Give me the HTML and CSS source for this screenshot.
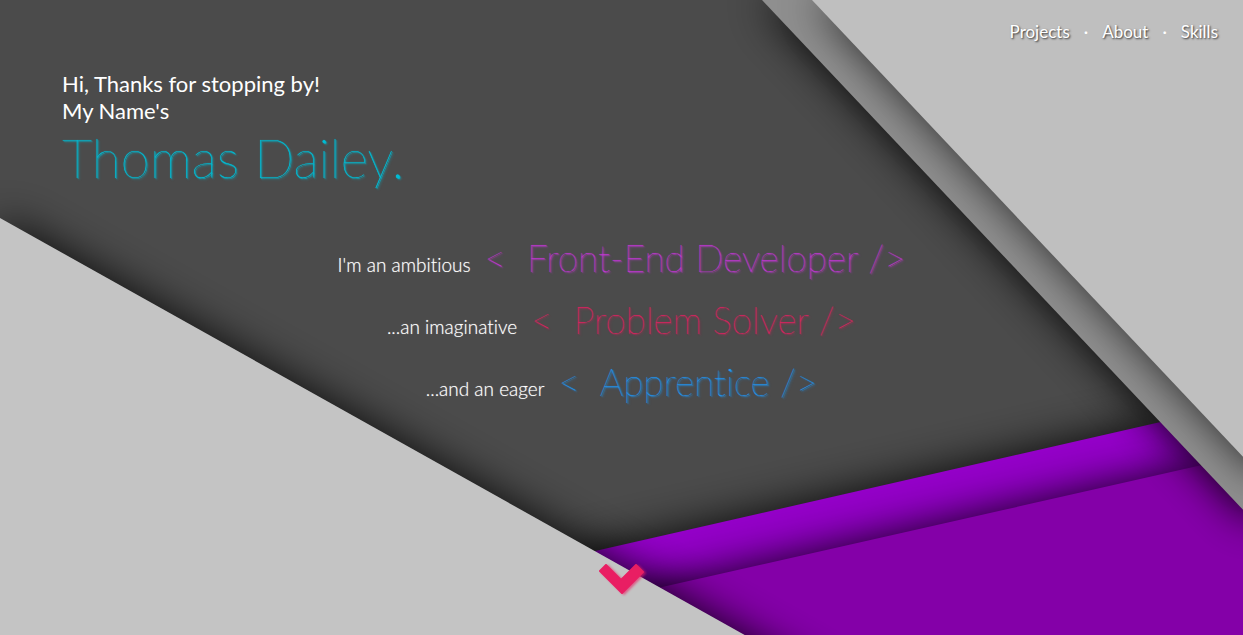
FILE: index.html
```html
<!DOCTYPE html>
<html lang="en">
<head>
<meta charset="utf-8">
<meta name="viewport" content="width=device-width, initial-scale=1">
<title>Thomas Dailey</title>
<link rel="stylesheet" href="styles.css">
</head>
<body>
<div class="hero">
  <svg class="backdrop" viewBox="0 0 1243 635" preserveAspectRatio="none" aria-hidden="true">
    <defs>
      <filter id="soft" filterUnits="userSpaceOnUse" x="-100" y="-100" width="1600" height="1000">
        <feGaussianBlur stdDeviation="22"/>
      </filter>
    </defs>
    <g class="shade" filter="url(#soft)"><path d="M580 555 1160 422 1300 700H580Z"/></g>
    <path class="violet" d="M560 559 1200 413V700H560Z"/>
    <g class="shade" filter="url(#soft)"><path d="M640 592 1200 466 1400 700H640Z"/></g>
    <path class="purple" d="M600 601 1300 443V700H600Z"/>
    <g class="shade" filter="url(#soft)"><path d="M762 0 1253 521 1400 400V0Z"/></g>
    <path class="stripe" d="M762 0 1362 636V0Z"/>
    <g class="shade-light" filter="url(#soft)"><path d="M812 0 1260 475 1400 400V0Z"/></g>
    <path class="corner" d="M812 0 1332 551V0Z"/>
    <g class="shade" filter="url(#soft)"><path d="M0 218 834 685H0Z"/></g>
    <path class="ground" d="M0 218 834 685H0Z"/>
  </svg>
  <nav class="nav">
    <a href="#projects">Projects</a><span class="dot">·</span><a href="#about">About</a><span class="dot">·</span><a href="#skills">Skills</a>
  </nav>
  <header class="intro">
    <p class="hello">Hi, Thanks for stopping by!<br>My Name's</p>
    <h1 class="name">Thomas Dailey.</h1>
  </header>
  <main class="roles">
    <p class="role"><span class="lead">I'm an ambitious</span><span class="tag orchid">&lt;&nbsp; Front-End Developer /&gt;</span></p>
    <p class="role"><span class="lead">...an imaginative</span><span class="tag rose">&lt;&nbsp; Problem Solver /&gt;</span></p>
    <p class="role"><span class="lead">...and an eager</span><span class="tag azure">&lt;&nbsp; Apprentice /&gt;</span></p>
  </main>
  <a class="down" href="#projects" aria-label="Scroll down">
    <svg class="chevron" viewBox="0 0 46 30"><path d="M7 1 22 16 37 1 44 8 23 29 1 7Z"/></svg>
  </a>
</div>
</body>
</html>
```
FILE: styles.css
```css
* { box-sizing: border-box; }

body {
  margin: 0;
  font-family: Lato, sans-serif;
  font-variant-ligatures: none;
  color: #fff;
}

.hero {
  position: relative;
  isolation: isolate;
  display: flex;
  flex-direction: column;
  min-height: 100vh;
  overflow: hidden;
  background: #4b4b4b;
}

.backdrop {
  position: absolute;
  inset: 0;
  z-index: -1;
  width: 100%;
  height: 100%;
}

.shade { fill: #000; opacity: 0.9; }
.shade-light { fill: #000; opacity: 0.7; }
.violet { fill: #9400c8; }
.purple { fill: #8400a8; }
.stripe { fill: #8f8f8f; }
.corner { fill: #bfbfbf; }
.ground { fill: #c4c4c4; }

.nav {
  display: flex;
  justify-content: flex-end;
  gap: 14px;
  padding: 21px 25px 0;
  font-size: 17px;
  line-height: 22px;
  text-shadow: 1px 1px 2px #333;
}

.nav a { color: inherit; text-decoration: none; }
.dot { text-shadow: none; }

.intro { padding: 27px 62px 0; }

.hello {
  margin: 0;
  font-size: 22px;
  line-height: 27px;
}

.name {
  margin: 0;
  font-size: 53px;
  line-height: 68px;
  font-weight: 100;
  color: #00bcd4;
  text-shadow: 0 0 1px #00bcd4, 1px 1px 1px #00bcd4, 2px 2px 2px rgba(0, 188, 212, 0.4);
}

.roles {
  display: flex;
  flex-direction: column;
  gap: 14px;
  padding-top: 42px;
}

.role {
  display: flex;
  justify-content: center;
  align-items: baseline;
  gap: 14px;
  margin: 0;
}

.lead {
  font-size: 19px;
  line-height: 24px;
  font-weight: 300;
  text-shadow: 0 0 1px rgba(255, 255, 255, 0.6);
}

.tag {
  font-size: 37px;
  line-height: 48px;
  font-weight: 100;
}

.orchid { color: #c837dc; text-shadow: 0 0 1px #c837dc, 1px 1px 1px #c837dc, 2px 2px 2px rgba(200, 55, 220, 0.4); }
.rose { color: #e91e63; text-shadow: 0 0 1px #e91e63, 1px 1px 1px rgba(233, 30, 99, 0.6), 2px 2px 2px rgba(233, 30, 99, 0.3); }
.azure { color: #2196f3; text-shadow: 0 0 1px #2196f3, 1px 1px 1px #2196f3, 2px 2px 2px rgba(33, 150, 243, 0.4); }

.down {
  align-self: center;
  margin: auto 0 41px;
  line-height: 0;
}

.chevron {
  width: 46px;
  height: 30px;
  overflow: visible;
  fill: #e91e63;
  stroke: #e91e63;
  stroke-width: 2;
  stroke-linejoin: round;
  filter: drop-shadow(2px 1px 1px rgba(233, 30, 99, 0.6));
}
```
